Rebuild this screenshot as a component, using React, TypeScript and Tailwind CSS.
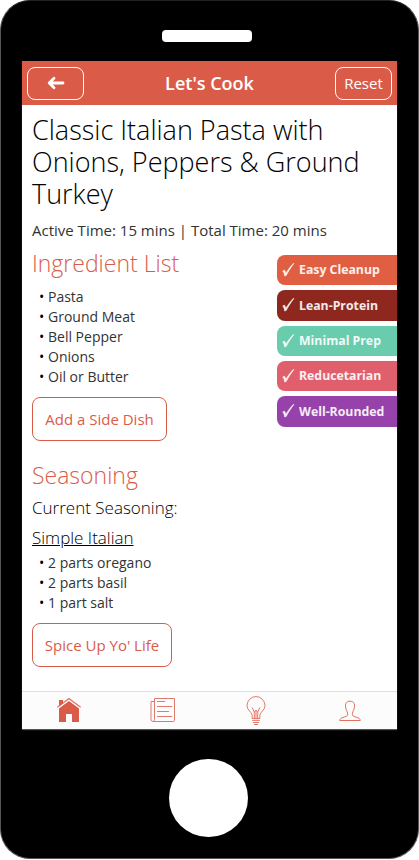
import React from "react";

const tags = [
  { label: "Easy Cleanup", style: "bg-[#e05f43] h-[30px]" },
  { label: "Lean-Protein", style: "bg-[#8e281f] h-[31px]" },
  { label: "Minimal Prep", style: "bg-[#68ccad] h-[30px]" },
  { label: "Reducetarian", style: "bg-[#e05f6d] h-[30px]" },
  { label: "Well-Rounded", style: "bg-[#9742ab] h-[31px]" },
];

function Bullets({ items }: { items: string[] }) {
  return (
    <ul className="pl-[7px] text-[14px] leading-[20px] text-[#333]">
      {items.map((item) => (
        <li key={item} className="flex gap-[3px]">
          <span className="w-[6px] text-black">•</span>
          <span>{item}</span>
        </li>
      ))}
    </ul>
  );
}

function ActionButton({ children, className }: { children: React.ReactNode; className: string }) {
  return (
    <button
      className={`h-[44px] rounded-[8px] border border-[#da5c48] text-[15px] whitespace-nowrap text-[#da5c48] ${className}`}
    >
      {children}
    </button>
  );
}

function Arrow() {
  return (
    <svg width="18" height="14" viewBox="0 0 18 14" fill="none" stroke="white" strokeWidth="2.8" strokeLinecap="round" strokeLinejoin="round">
      <path d="M7 2.3 2.2 7 7 11.7M2.8 7H16" />
    </svg>
  );
}

function HomeIcon() {
  return (
    <svg className="mb-[2px]" width="26" height="26" viewBox="0 0 26 26" fill="#da5c48">
      <path d="M3 3h4v4L3 10z" />
      <path d="M13 3.8 23 11.6V25h-7v-8h-6v8H3V11.6z" />
      <path d="M1.5 11 13 3.1 24.5 11" fill="none" stroke="white" strokeWidth="1.3" />
      <path d="M1.3 10.2 13 1.6l11.7 8.6" fill="none" stroke="#da5c48" strokeWidth="1.4" opacity=".8" />
    </svg>
  );
}

function ListIcon() {
  return (
    <svg className="mb-[2px]" width="26" height="26" viewBox="0 0 26 26" fill="none" stroke="#da5c48" strokeWidth="1" opacity=".8">
      <path d="M4.5 21V1.5h20v21.8a1.2 1.2 0 0 1-1.2 1.2H3a2 2 0 0 1-2-2V4.5h3.5M4.5 21c0 2-.2 3-1.2 3.5" />
      <path d="M7 4.5h8M7 9.5h15.3M7 14.5h12M7 19.5h15.3" />
    </svg>
  );
}

function BulbIcon() {
  return (
    <svg width="20" height="30" viewBox="0 0 20 30" fill="none" stroke="#da5c48" strokeWidth=".95" opacity=".85">
      <path d="M6.2 22.5v-3C6.2 16 1 14.5 1 9.6a9 9 0 0 1 18 0c0 4.9-5.2 6.4-5.2 9.9v3z" />
      <path d="M8.3 22v-6L6 11.5M11.7 22v-6l2.3-4.5M8.2 15.8l1.8-1.6 1.8 1.6M10 14.4V22M6.2 24.4h7.6M7 26.5h6M8 28.5h4" />
    </svg>
  );
}

function PersonIcon() {
  return (
    <svg width="22" height="22" viewBox="0 0 22 22" fill="none" stroke="#da5c48" strokeWidth="1" opacity=".85">
      <path d="M11 1.2c-3.5 0-4.7 2-4.5 4.9.1 3 1.2 4.4 1.7 5.8.6 1.6.7 3.4-.3 4.1-2 1.3-6.3 1.3-7.2 3.9v.6h20.6v-.6c-.9-2.6-5.2-2.6-7.2-3.9-1-.7-.9-2.5-.3-4.1.5-1.4 1.6-2.8 1.7-5.8.2-2.9-1-4.9-4.5-4.9z" />
    </svg>
  );
}

export default function App() {
  return (
    <div className="h-[860px] w-[419px] bg-white font-['Open_Sans',sans-serif]">
      <div className="flex h-[859px] w-[419px] flex-col items-center rounded-[30px] border border-[#555] border-t-[#222] bg-black">
        <div className="mt-[29px] mr-[5px] h-[12px] w-[90px] shrink-0 rounded-[4px] bg-white" />

        <div className="mt-[19px] flex h-[668px] w-[375px] shrink-0 flex-col bg-white shadow-[0_1px_1px_#555]">
          <header className="flex h-[44px] shrink-0 items-center justify-between bg-[#da5c48] px-[5px] text-white">
            <button className="flex h-[33px] w-[57px] items-center justify-center rounded-[8px] border border-white">
              <Arrow />
            </button>
            <h1 className="text-[18px] font-semibold">Let&apos;s Cook</h1>
            <button className="h-[33px] w-[57px] rounded-[8px] border border-white text-[15px] leading-none">
              Reset
            </button>
          </header>

          <main className="flex min-h-0 flex-1 flex-col pl-[10px]">
            <h2 className="mt-[9px] w-[345px] text-[27px] leading-[32px] font-light text-black">
              Classic Italian Pasta with Onions, Peppers &amp; Ground Turkey
            </h2>
            <p className="mt-[10px] text-[15px] leading-[20px] text-[#333]">
              Active Time: 15 mins | Total Time: 20 mins
            </p>

            <div className="mt-[7px] flex h-[193px] justify-between">
              <section>
                <h3 className="mt-[1px] mb-[9px] text-[23px] leading-[30px] font-light text-[#da5c48]">
                  Ingredient List
                </h3>
                <Bullets items={["Pasta", "Ground Meat", "Bell Pepper", "Onions", "Oil or Butter"]} />
                <ActionButton className="mt-[10px] w-[135px]">Add a Side Dish</ActionButton>
              </section>
              <div className="mt-[8px] flex w-[120px] flex-col gap-[5px]">
                {tags.map((tag) => (
                  <div
                    key={tag.label}
                    className={`flex shrink-0 items-center rounded-l-[8px] pl-[5px] text-[13px] font-bold text-white/90 ${tag.style}`}
                  >
                    <svg className="mr-[4px] mb-[2px] shrink-0" width="13" height="15" viewBox="0 0 13 15" fill="currentColor" stroke="currentColor" strokeWidth=".5">
                      <path d="M12 1.5C9.2 5 6.5 9 4.2 13.5l-1.6.5C2.3 11.5 1.7 10 .6 9l1.7-1c.8.8 1.2 1.8 1.5 3.2C6.2 7.4 8.9 4 11.2 1.5z" />
                    </svg>
                    <span className="origin-left scale-x-[.945] whitespace-nowrap">{tag.label}</span>
                  </div>
                ))}
              </div>
            </div>

            <section className="mt-[20px] flex flex-col items-start">
              <h3 className="text-[23px] leading-[30px] font-light text-[#da5c48]">Seasoning</h3>
              <p className="mt-[6px] text-[17px] leading-[24px] font-light text-black">Current Seasoning:</p>
              <p className="mt-[6px] text-[17px] leading-[24px] font-light text-black underline">Simple Italian</p>
              <div className="mt-[3px]">
                <Bullets items={["2 parts oregano", "2 parts basil", "1 part salt"]} />
              </div>
              <ActionButton className="mt-[10px] w-[140px]">Spice Up Yo&apos; Life</ActionButton>
            </section>
          </main>

          <nav className="grid h-[38px] shrink-0 grid-cols-4 place-items-center border-t border-[#ddd] bg-[#fcfcfc]">
            <HomeIcon />
            <ListIcon />
            <BulbIcon />
            <PersonIcon />
          </nav>
        </div>

        <div className="mt-[30px] mr-[2px] h-[78px] w-[79px] shrink-0 rounded-full bg-white" />
      </div>
    </div>
  );
}
